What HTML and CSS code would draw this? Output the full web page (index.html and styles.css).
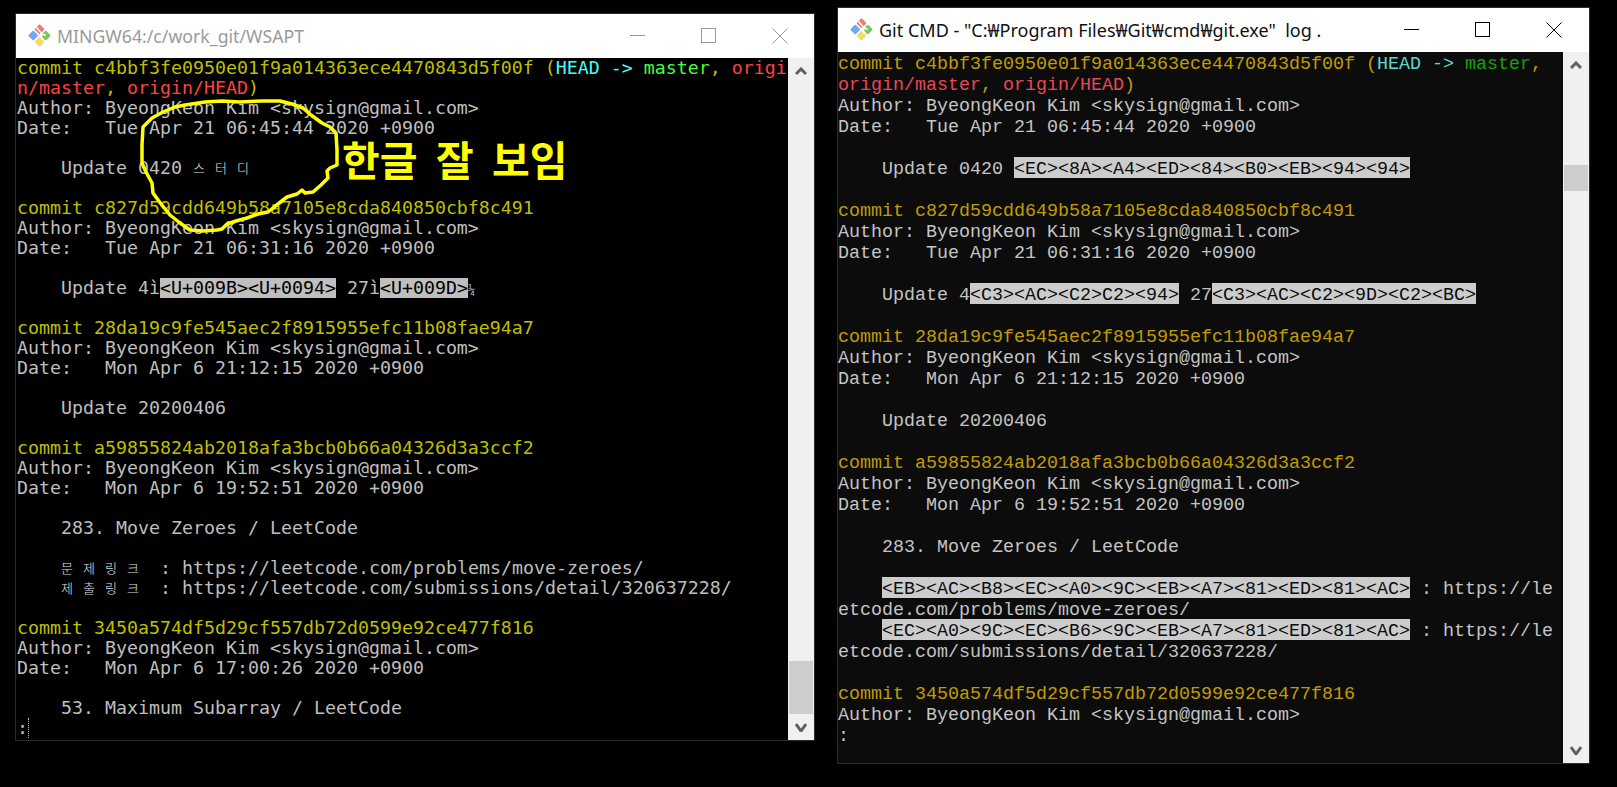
FILE: index.html
```html
<!DOCTYPE html>
<html lang="ko">
<head>
<meta charset="utf-8">
<title>Terminals</title>
<link rel="stylesheet" href="styles.css">
</head>
<body>
<svg width="0" height="0" class="defs">
  <defs>
    <g id="git">
      <rect x="2.5" y="8.5" width="7" height="7" rx="1" transform="rotate(45 6 12)" fill="#6fa8f0"/>
      <rect x="14.5" y="8.5" width="7" height="7" rx="1" transform="rotate(45 18 12)" fill="#7cc75c"/>
      <rect x="8.5" y="14.5" width="7" height="7" rx="1" transform="rotate(45 12 18)" fill="#f4dc6a"/>
      <rect x="8.5" y="2.5" width="7" height="7" rx="1" transform="rotate(45 12 6)" fill="#ee7b78"/>
      <path d="M9 4 L14 10 M14 10 L14 16 M14 10 L18 12" stroke="#fff" stroke-width="1.4" fill="none"/>
      <circle cx="14" cy="10.5" r="1.6" fill="#fff"/>
    </g>
    <path id="chev-up" d="M1 7 L6 2 L11 7" fill="none" stroke-width="3"/>
    <path id="chev-down" d="M1 1 L6 8 L11 1" fill="none" stroke-width="3"/>
  </defs>
</svg>

<section class="window win-mingw">
  <header class="titlebar">
    <svg class="app-icon" viewBox="0 0 24 24"><use href="#git"/></svg>
    <span class="title">MINGW64:/c/work_git/WSAPT</span>
    <div class="controls">
      <svg class="ctl" viewBox="0 0 16 16"><path d="M0 7.5H15"/></svg>
      <svg class="ctl" viewBox="0 0 16 16"><rect x="0.5" y="0.5" width="14" height="14"/></svg>
      <svg class="ctl" viewBox="0 0 16 16"><path d="M0.5 0.5L15.5 15.5M15.5 0.5L0.5 15.5"/></svg>
    </div>
  </header>
  <div class="body">
    <div class="term">
      <div class="ln"><span class="y">commit c4bbf3fe0950e01f9a014363ece4470843d5f00f (</span><span class="c">HEAD -&gt; </span><span class="g">master</span><span class="y">, </span><span class="r">origi</span></div>
      <div class="ln"><span class="r">n/master</span><span class="y">, </span><span class="r">origin/HEAD</span><span class="y">)</span></div>
      <div class="ln">Author: ByeongKeon Kim &lt;skysign@gmail.com&gt;</div>
      <div class="ln">Date:   Tue Apr 21 06:45:44 2020 +0900</div>
      <div class="ln"></div>
      <div class="ln">    Update 0420 <span class="ko">스터디</span></div>
      <div class="ln"></div>
      <div class="ln y">commit c827d59cdd649b58a7105e8cda840850cbf8c491</div>
      <div class="ln">Author: ByeongKeon Kim &lt;skysign@gmail.com&gt;</div>
      <div class="ln">Date:   Tue Apr 21 06:31:16 2020 +0900</div>
      <div class="ln"></div>
      <div class="ln">    Update 4ì<span class="hl">&lt;U+009B&gt;&lt;U+0094&gt;</span> 27ì<span class="hl">&lt;U+009D&gt;</span><span class="narrow">¼</span></div>
      <div class="ln"></div>
      <div class="ln y">commit 28da19c9fe545aec2f8915955efc11b08fae94a7</div>
      <div class="ln">Author: ByeongKeon Kim &lt;skysign@gmail.com&gt;</div>
      <div class="ln">Date:   Mon Apr 6 21:12:15 2020 +0900</div>
      <div class="ln"></div>
      <div class="ln">    Update 20200406</div>
      <div class="ln"></div>
      <div class="ln y">commit a59855824ab2018afa3bcb0b66a04326d3a3ccf2</div>
      <div class="ln">Author: ByeongKeon Kim &lt;skysign@gmail.com&gt;</div>
      <div class="ln">Date:   Mon Apr 6 19:52:51 2020 +0900</div>
      <div class="ln"></div>
      <div class="ln">    283. Move Zeroes / LeetCode</div>
      <div class="ln"></div>
      <div class="ln">    <span class="ko">문제링크</span> : https://leetcode.com/problems/move-zeroes/</div>
      <div class="ln">    <span class="ko">제출링크</span> : https://leetcode.com/submissions/detail/320637228/</div>
      <div class="ln"></div>
      <div class="ln y">commit 3450a574df5d29cf557db72d0599e92ce477f816</div>
      <div class="ln">Author: ByeongKeon Kim &lt;skysign@gmail.com&gt;</div>
      <div class="ln">Date:   Mon Apr 6 17:00:26 2020 +0900</div>
      <div class="ln"></div>
      <div class="ln">    53. Maximum Subarray / LeetCode</div>
      <div class="ln">:<span class="cursor"></span></div>
    </div>
    <aside class="scrollbar">
      <div class="btn"><svg class="chev" viewBox="0 0 12 9"><use href="#chev-up"/></svg></div>
      <div class="track"><div class="thumb"></div></div>
      <div class="btn"><svg class="chev" viewBox="0 0 12 9"><use href="#chev-down"/></svg></div>
    </aside>
  </div>
</section>

<section class="window win-cmd">
  <header class="titlebar">
    <svg class="app-icon" viewBox="0 0 24 24"><use href="#git"/></svg>
    <span class="title">Git CMD - "C:₩Program Files₩Git₩cmd₩git.exe"  log .</span>
    <div class="controls">
      <svg class="ctl" viewBox="0 0 16 16"><path d="M0 7.5H15"/></svg>
      <svg class="ctl" viewBox="0 0 16 16"><rect x="0.5" y="0.5" width="14" height="14"/></svg>
      <svg class="ctl" viewBox="0 0 16 16"><path d="M0.5 0.5L15.5 15.5M15.5 0.5L0.5 15.5"/></svg>
    </div>
  </header>
  <div class="body">
    <div class="term">
      <div class="ln"><span class="y">commit c4bbf3fe0950e01f9a014363ece4470843d5f00f (</span><span class="c">HEAD -&gt; </span><span class="g">master</span><span class="y">,</span></div>
      <div class="ln"><span class="r">origin/master</span><span class="y">, </span><span class="r">origin/HEAD</span><span class="y">)</span></div>
      <div class="ln">Author: ByeongKeon Kim &lt;skysign@gmail.com&gt;</div>
      <div class="ln">Date:   Tue Apr 21 06:45:44 2020 +0900</div>
      <div class="ln"></div>
      <div class="ln">    Update 0420 <span class="hl">&lt;EC&gt;&lt;8A&gt;&lt;A4&gt;&lt;ED&gt;&lt;84&gt;&lt;B0&gt;&lt;EB&gt;&lt;94&gt;&lt;94&gt;</span></div>
      <div class="ln"></div>
      <div class="ln y">commit c827d59cdd649b58a7105e8cda840850cbf8c491</div>
      <div class="ln">Author: ByeongKeon Kim &lt;skysign@gmail.com&gt;</div>
      <div class="ln">Date:   Tue Apr 21 06:31:16 2020 +0900</div>
      <div class="ln"></div>
      <div class="ln">    Update 4<span class="hl">&lt;C3&gt;&lt;AC&gt;&lt;C2&gt;C2&gt;&lt;94&gt;</span> 27<span class="hl">&lt;C3&gt;&lt;AC&gt;&lt;C2&gt;&lt;9D&gt;&lt;C2&gt;&lt;BC&gt;</span></div>
      <div class="ln"></div>
      <div class="ln y">commit 28da19c9fe545aec2f8915955efc11b08fae94a7</div>
      <div class="ln">Author: ByeongKeon Kim &lt;skysign@gmail.com&gt;</div>
      <div class="ln">Date:   Mon Apr 6 21:12:15 2020 +0900</div>
      <div class="ln"></div>
      <div class="ln">    Update 20200406</div>
      <div class="ln"></div>
      <div class="ln y">commit a59855824ab2018afa3bcb0b66a04326d3a3ccf2</div>
      <div class="ln">Author: ByeongKeon Kim &lt;skysign@gmail.com&gt;</div>
      <div class="ln">Date:   Mon Apr 6 19:52:51 2020 +0900</div>
      <div class="ln"></div>
      <div class="ln">    283. Move Zeroes / LeetCode</div>
      <div class="ln"></div>
      <div class="ln">    <span class="hl">&lt;EB&gt;&lt;AC&gt;&lt;B8&gt;&lt;EC&gt;&lt;A0&gt;&lt;9C&gt;&lt;EB&gt;&lt;A7&gt;&lt;81&gt;&lt;ED&gt;&lt;81&gt;&lt;AC&gt;</span> : https://le</div>
      <div class="ln">etcode.com/problems/move-zeroes/</div>
      <div class="ln">    <span class="hl">&lt;EC&gt;&lt;A0&gt;&lt;9C&gt;&lt;EC&gt;&lt;B6&gt;&lt;9C&gt;&lt;EB&gt;&lt;A7&gt;&lt;81&gt;&lt;ED&gt;&lt;81&gt;&lt;AC&gt;</span> : https://le</div>
      <div class="ln">etcode.com/submissions/detail/320637228/</div>
      <div class="ln"></div>
      <div class="ln y">commit 3450a574df5d29cf557db72d0599e92ce477f816</div>
      <div class="ln">Author: ByeongKeon Kim &lt;skysign@gmail.com&gt;</div>
      <div class="ln">:</div>
    </div>
    <aside class="scrollbar">
      <div class="btn"><svg class="chev" viewBox="0 0 12 9"><use href="#chev-up"/></svg></div>
      <div class="track"><div class="thumb"></div></div>
      <div class="btn"><svg class="chev" viewBox="0 0 12 9"><use href="#chev-down"/></svg></div>
    </aside>
  </div>
</section>

<svg class="scribble" viewBox="0 0 1617 787">
  <path d="M205 102 L222 101 L240 102 L262 101 L280 101 L292 104 L303 108 L311 115 L322 123 L330 127 L336 133 L337 150 L337 165 L330 168 L327 171 L328 178 L321 185 L313 192 L305 193 L302 190 L297 194 L287 197 L278 204 L268 212 L258 214 L247 218 L236 221 L227 224 L222 229 L217 230 L203 231 L190 230 L180 223 L170 215 L161 204 L153 193 L152 183 L146 172 L142 163 L142 145 L143 127 L152 118 L163 112 L175 107 L185 105 Z"/>
</svg>
<div class="note">한글 잘 보임</div>
</body>
</html>
```

FILE: styles.css
```css
html, body {
  margin: 0;
  padding: 0;
  height: 100%;
  background: #000;
  overflow: hidden;
}

.defs {
  position: absolute;
}

.window {
  position: absolute;
  display: flex;
  flex-direction: column;
  box-sizing: border-box;
  border: 1px solid #2b2b2b;
}

.win-mingw {
  left: 15px;
  top: 13px;
  width: 800px;
  height: 728px;
}

.win-cmd {
  left: 837px;
  top: 7px;
  width: 753px;
  height: 757px;
}

.titlebar {
  display: flex;
  align-items: center;
  background: #fff;
  flex: none;
  height: 44px;
  padding-left: 11px;
}

.app-icon {
  width: 25px;
  height: 25px;
  flex: none;
  margin: -2px 5px 0 0;
}

.title {
  font-family: "Noto Sans", "Open Sans", sans-serif;
  white-space: pre;
}

.win-mingw .title {
  color: #9a9a9a;
  font-size: 17.7px;
}

.win-cmd .title {
  color: #111;
  font-size: 18px;
}

.controls {
  display: flex;
  align-items: center;
  gap: 55px;
  margin-left: auto;
  margin-right: 26px;
}

.win-cmd .controls {
  margin-right: 27px;
}

.ctl {
  width: 16px;
  height: 16px;
  fill: none;
  stroke-width: 1;
  display: block;
}

.win-mingw .ctl {
  stroke: #999;
}

.win-cmd .ctl {
  stroke: #000;
}

.body {
  flex: 1;
  display: flex;
  min-height: 0;
}

.term {
  flex: 1;
  min-width: 0;
  overflow: hidden;
}

.win-mingw .term {
  background: #000;
  color: #bfbfbf;
  font-family: "DejaVu Sans Mono", monospace;
  font-size: 18.27px;
  padding-left: 1px;
}

.win-cmd .term {
  background: #0c0c0c;
  color: #c4c4c4;
  font-family: "Liberation Mono", monospace;
  font-size: 18.33px;
}

.ln {
  white-space: pre;
}

.win-mingw .ln {
  height: 20px;
  line-height: 20px;
}

.win-cmd .ln {
  height: 21px;
  line-height: 25px;
}

.win-mingw .y { color: #bfbf00; }
.win-mingw .r { color: #ff4040; }
.win-mingw .c { color: #40ffff; }
.win-mingw .g { color: #40ff40; }

.win-cmd .y { color: #c19c00; }
.win-cmd .r { color: #e74856; }
.win-cmd .c { color: #61d6d6; }
.win-cmd .g { color: #13a10e; }

.hl {
  display: inline-block;
  vertical-align: top;
}

.win-mingw .hl {
  background: #bfbfbf;
  color: #000;
}

.win-cmd .hl {
  background: #cccccc;
  color: #0c0c0c;
  height: 21px;
}

.ko {
  font-family: "Noto Sans CJK KR", sans-serif;
  font-size: 13px;
  font-weight: 300;
  letter-spacing: 10.04px;
  display: inline-block;
  vertical-align: top;
  color: #e0e0e0;
}

.narrow {
  font-size: 12px;
}

.cursor {
  display: inline-block;
  height: 20px;
  border-left: 1px dotted #bfbfbf;
  vertical-align: top;
}

.scrollbar {
  flex: none;
  width: 26px;
  background: #f0f0f0;
  display: flex;
  flex-direction: column;
}

.btn {
  flex: none;
  height: 26px;
  display: flex;
  align-items: center;
  justify-content: center;
}

.chev {
  width: 12px;
  height: 9px;
  stroke: #606060;
}

.track {
  flex: 1;
  min-height: 0;
}

.thumb {
  margin: 0 1px;
  background: #cdcdcd;
}

.win-mingw .thumb {
  margin-top: 577px;
  height: 53px;
}

.win-cmd .thumb {
  margin-top: 87px;
  height: 26px;
}

.scribble {
  position: absolute;
  left: 0;
  top: 0;
  width: 1617px;
  height: 787px;
  pointer-events: none;
  fill: none;
  stroke: #ffff00;
  stroke-width: 3.5;
  stroke-linejoin: round;
}

.note {
  position: absolute;
  left: 342px;
  top: 130px;
  font-family: "Noto Sans CJK KR", sans-serif;
  font-weight: 700;
  font-size: 41px;
  line-height: 56px;
  word-spacing: 7px;
  color: #ffff00;
  white-space: pre;
}
```
